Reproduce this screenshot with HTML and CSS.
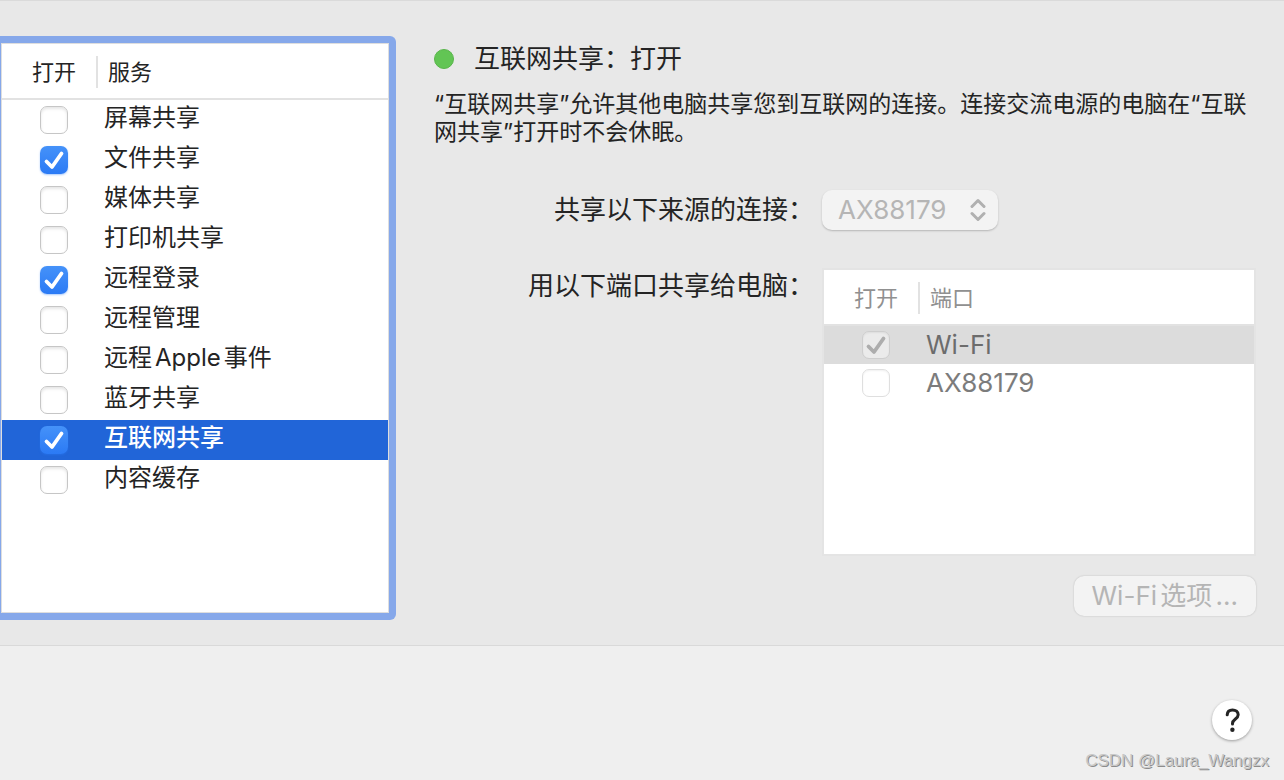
FILE: index.html
```html
<!DOCTYPE html>
<html lang="zh-CN">
<head>
<meta charset="utf-8">
<title>共享</title>
<link rel="stylesheet" href="styles.css">
</head>
<body>
<main class="sharing">
  <section class="services">
    <div class="services-box">
      <table class="list">
        <thead>
          <tr><th class="col-on" scope="col"><span>打开</span></th><th class="col-name" scope="col"><span>服务</span></th></tr>
        </thead>
        <tbody>
          <tr><td><input class="check" type="checkbox" id="s1"></td><td><label for="s1">屏幕共享</label></td></tr>
          <tr><td><input class="check" type="checkbox" id="s2" checked></td><td><label for="s2">文件共享</label></td></tr>
          <tr><td><input class="check" type="checkbox" id="s3"></td><td><label for="s3">媒体共享</label></td></tr>
          <tr><td><input class="check" type="checkbox" id="s4"></td><td><label for="s4">打印机共享</label></td></tr>
          <tr><td><input class="check" type="checkbox" id="s5" checked></td><td><label for="s5">远程登录</label></td></tr>
          <tr><td><input class="check" type="checkbox" id="s6"></td><td><label for="s6">远程管理</label></td></tr>
          <tr><td><input class="check" type="checkbox" id="s7"></td><td><label for="s7">远程Apple事件</label></td></tr>
          <tr><td><input class="check" type="checkbox" id="s8"></td><td><label for="s8">蓝牙共享</label></td></tr>
          <tr class="selected"><td><input class="check" type="checkbox" id="s9" checked></td><td><label for="s9">互联网共享</label></td></tr>
          <tr><td><input class="check" type="checkbox" id="s10"></td><td><label for="s10">内容缓存</label></td></tr>
        </tbody>
      </table>
    </div>
  </section>

  <section class="detail">
    <h1 class="status"><span class="status-dot"></span>互联网共享：打开</h1>
    <p class="description">“互联网共享”允许其他电脑共享您到互联网的连接。连接交流电源的电脑在“互联网共享”打开时不会休眠。</p>
    <div class="form">
      <label class="form-label form-label-centered" for="source">共享以下来源的连接：</label>
      <div class="popup">
        <select id="source" disabled><option>AX88179</option></select>
        <svg class="popup-arrows" viewBox="0 0 16 24" aria-hidden="true"><path d="M2 8.500 8 2.500l6 6M2 15.500l6 6 6-6"/></svg>
      </div>
      <div class="form-label" id="ports-label">用以下端口共享给电脑：</div>
      <div class="ports">
        <table class="list list-disabled" aria-labelledby="ports-label">
          <thead>
            <tr><th class="col-on" scope="col"><span>打开</span></th><th class="col-name" scope="col"><span>端口</span></th></tr>
          </thead>
          <tbody>
            <tr class="selected"><td><input class="check" type="checkbox" id="p1" checked disabled></td><td><label for="p1">Wi-Fi</label></td></tr>
            <tr><td><input class="check" type="checkbox" id="p2" disabled></td><td><label for="p2">AX88179</label></td></tr>
          </tbody>
        </table>
      </div>
    </div>
    <button class="options" type="button" disabled>Wi-Fi选项...</button>
  </section>
</main>

<footer class="footer">
  <button class="help" type="button" aria-label="帮助">
    <svg viewBox="0 0 40 40" aria-hidden="true"><path d="M15.200 14.800c.2-3.100 2.300-4.900 5.300-4.900 3.200 0 5.700 1.900 5.700 4.900 0 4.200-5.700 4.300-5.700 8.700v.6"/><circle cx="20.400" cy="29.800" r="2.200"/></svg>
  </button>
  <span class="watermark">CSDN @Laura_Wangzx</span>
</footer>
</body>
</html>
```

FILE: styles.css
```css
* {
  box-sizing: border-box;
}

body {
  margin: 0;
  min-height: 100vh;
  display: flex;
  flex-direction: column;
  background: #efefef;
  color: #242424;
  font-family: Inter, "Noto Sans CJK SC", sans-serif;
  text-autospace: normal;
}

.sharing {
  display: grid;
  grid-template-columns: 396px 1fr;
  padding: 35px 0 25px;
  background: #e8e8e8;
  border-top: 1px solid #dadada;
  border-bottom: 1px solid #d9d9d9;
}

.services {
  display: flex;
  padding: 7px 7px 7px 1px;
  border-radius: 0 6px 6px 0;
  background: #86a8ea;
}

.services-box {
  flex: 1;
  background: #fff;
  border: 1px solid #dedede;
}

/* Two-column lists */
.list {
  width: 100%;
  border-spacing: 0;
  table-layout: fixed;
}

.list th,
.list td {
  padding: 0;
  text-align: left;
}

.list th {
  height: 56px;
  padding-top: 2px;
  border-bottom: 2px solid #e2e2e2;
  font-size: 22px;
  font-weight: 400;
  line-height: 32px;
}

.list .col-on {
  width: 96px;
}

.list th span {
  display: block;
}

.list .col-on span {
  padding-left: 30px;
  border-right: 2px solid #e2e2e2;
}

.list .col-name {
  padding-left: 10px;
}

.list td {
  height: 40px;
  font-size: 24px;
}

.list td:first-child {
  padding-left: 38px;
}

.list td:last-child {
  padding: 0 0 4px 6px;
}

.list label {
  display: block;
  line-height: 32px;
}

.selected {
  background: #2165d8;
  color: #fff;
  font-weight: 500;
}

.check {
  appearance: none;
  display: block;
  width: 28px;
  height: 28px;
  margin: 0;
  border: 1px solid #c6c6c6;
  border-radius: 7px;
  background: #fff;
  box-shadow: inset 0 2px 3px rgba(0, 0, 0, 0.1);
}

.check:checked {
  border: 0;
  background: url('data:image/svg+xml,<svg xmlns="http://www.w3.org/2000/svg" viewBox="0 0 28 28"><path d="M6.500 15.500 12 21 21.500 7.500" fill="none" stroke="white" stroke-width="3.800" stroke-linecap="round" stroke-linejoin="round"/></svg>'), linear-gradient(#4592f9, #2b7af5);
  box-shadow: 0 1px 2px rgba(43, 122, 245, 0.4);
}

.list-disabled th {
  color: #909090;
}

.list-disabled td {
  height: 38px;
  font-size: 26px;
  color: #7c7c7c;
}

.list-disabled td:last-child {
  padding-bottom: 0;
}

.list-disabled .selected {
  background: #dcdcdc;
  font-weight: 400;
}

.list-disabled .selected td {
  color: #6c6c6c;
}

.check:disabled {
  border: 1px solid #dfdfdf;
  box-shadow: inset 0 1px 2px rgba(0, 0, 0, 0.06);
}

.check:disabled:checked {
  border-color: #cecece;
  background: #ebebeb url('data:image/svg+xml,<svg xmlns="http://www.w3.org/2000/svg" viewBox="0 0 28 28"><path d="M6.500 15.500 12 21 21.500 7.500" fill="none" stroke="%23adadad" stroke-width="3.800" stroke-linecap="round" stroke-linejoin="round"/></svg>') center / 28px 28px;
}

/* Detail pane */
.detail {
  display: flex;
  flex-direction: column;
  padding: 2px 28px 4px 38px;
}

.status {
  display: flex;
  align-items: center;
  gap: 20px;
  margin: 0 0 10px;
  font-size: 26px;
  font-weight: 400;
  line-height: 42px;
}

.status-dot {
  width: 20px;
  height: 20px;
  border: 1px solid #58b54a;
  border-radius: 50%;
  background: #62c554;
}

.description {
  margin: 0 0 44px;
  font-size: 23px;
  line-height: 28px;
}

.form {
  display: grid;
  grid-template-columns: 1fr 434px;
  gap: 40px 8px;
}

.form-label {
  font-size: 26px;
  line-height: 32px;
  text-align: right;
}

.form-label-centered {
  align-self: center;
}

.popup {
  position: relative;
  justify-self: start;
}

.popup select {
  appearance: none;
  display: block;
  width: 176px;
  height: 40px;
  padding: 0 16px 2px;
  border: 0;
  border-radius: 10px;
  background: #f3f3f3;
  box-shadow: 0 1px 2px rgba(0, 0, 0, 0.22);
  color: #b5b5b5;
  font: inherit;
  font-size: 26px;
  opacity: 1;
}

.popup-arrows {
  position: absolute;
  top: 8px;
  right: 12px;
  width: 16px;
  height: 24px;
  fill: none;
  stroke: #b0b0b0;
  stroke-width: 3;
  stroke-linecap: round;
  stroke-linejoin: round;
}

.ports {
  min-height: 284px;
  margin: 0 2px;
  background: #fff;
  box-shadow: 0 0 0 2px #e4e4e4;
}

.options {
  align-self: flex-end;
  height: 40px;
  margin-top: 22px;
  padding: 0 18px;
  border: 0;
  border-radius: 10px;
  background: #f3f3f3;
  box-shadow: 0 0 2px rgba(0, 0, 0, 0.2);
  color: #b5b5b5;
  font: inherit;
  font-size: 26px;
  line-height: 38px;
}

.footer {
  flex: 1;
  display: flex;
  flex-direction: column;
  align-items: flex-end;
  justify-content: flex-end;
  gap: 10px;
  padding: 0 15px 8px;
}

.help {
  width: 40px;
  height: 40px;
  margin-right: 17px;
  padding: 0;
  border: 0;
  border-radius: 50%;
  background: #fff;
  box-shadow: 0 1px 3px rgba(0, 0, 0, 0.35);
}

.help svg {
  display: block;
  fill: none;
  stroke: #242424;
  stroke-width: 3;
  stroke-linecap: round;
}

.help circle {
  fill: #242424;
  stroke: none;
}

.watermark {
  color: #c8c8c8;
  font-family: "Liberation Sans", sans-serif;
  font-size: 17px;
  line-height: 22px;
  text-shadow: 1px 1px 0 #8c8c8c;
}
```
